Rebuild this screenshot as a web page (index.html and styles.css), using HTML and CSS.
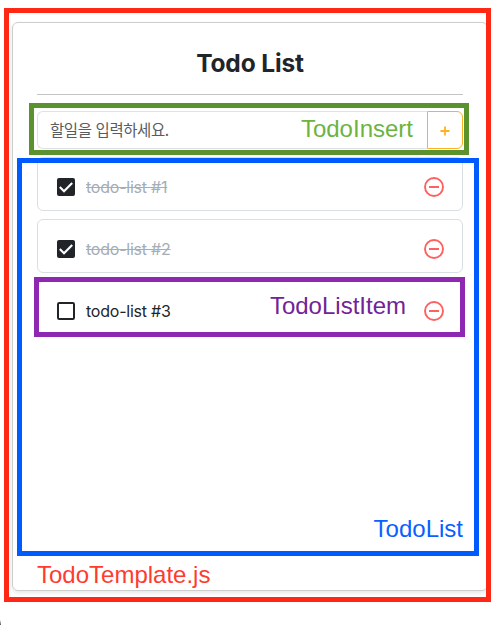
FILE: index.html
```html
<!DOCTYPE html>
<html lang="ko">
<head>
<meta charset="utf-8">
<title>Todo List</title>
<link rel="stylesheet" href="styles.css">
</head>
<body>
<svg class="symbols" aria-hidden="true">
  <symbol id="checked" viewBox="0 0 18 18"><rect width="18" height="18" rx="2" fill="#212529"/><path d="M2.8 9.1 7 13.2 15.2 4.9" fill="none" stroke="#fff" stroke-width="2.1"/></symbol>
  <symbol id="unchecked" viewBox="0 0 18 18"><rect x="1" y="1" width="16" height="16" rx="1.2" fill="none" stroke="#212529" stroke-width="2"/></symbol>
  <symbol id="remove" viewBox="0 0 20 20"><circle cx="10" cy="10" r="9" fill="none" stroke="#ff6060" stroke-width="1.9"/><path d="M5 10h10" stroke="#ff6060" stroke-width="2"/></symbol>
</svg>
<main class="card">
  <h1 class="title">Todo List</h1>
  <form class="insert">
    <div class="field"><span class="placeholder">할일을 입력하세요.</span></div>
    <button class="add" type="button" aria-label="추가"><svg width="10" height="10" viewBox="0 0 10 10"><path d="M5 .5v9M.5 5h9" stroke="#fcb322" stroke-width="1.8"/></svg></button>
  </form>
  <ul class="list">
    <li class="item done"><svg class="check"><use href="#checked"/></svg><span class="text">todo-list #1</span><svg class="remove"><use href="#remove"/></svg></li>
    <li class="item done"><svg class="check"><use href="#checked"/></svg><span class="text">todo-list #2</span><svg class="remove"><use href="#remove"/></svg></li>
    <li class="item"><svg class="check"><use href="#unchecked"/></svg><span class="text">todo-list #3</span><svg class="remove"><use href="#remove"/></svg></li>
  </ul>
</main>
<div class="outline outline-template"><span class="label">TodoTemplate.js</span></div>
<div class="outline outline-insert"><span class="label">TodoInsert</span></div>
<div class="outline outline-list"><span class="label">TodoList</span></div>
<div class="outline outline-item"><span class="label">TodoListItem</span></div>
<div class="corner"></div>
</body>
</html>
```
FILE: styles.css
```css
* { box-sizing: border-box; }
body {
  position: relative;
  margin: 0;
  height: 625px;
  padding: 22px 11px 0 12px;
  overflow: hidden;
  background: #fff;
  color: #212529;
  font-family: Inter, "Noto Sans CJK KR", sans-serif;
}
.symbols { position: absolute; width: 0; height: 0; }
.card {
  height: 569px;
  padding: 0 24px;
  border: 1px solid #cdcdcd;
  border-radius: 6px;
  box-shadow: 0 2px 4px rgba(0, 0, 0, .1);
}
.title {
  height: 72px;
  margin: 0 0 16px;
  padding-top: 25px;
  border-bottom: 1px solid #c4c4c4;
  font-size: 24.5px;
  line-height: 30px;
  font-weight: 700;
  letter-spacing: -.15px;
  text-align: center;
}
.insert { display: flex; height: 38px; margin: 0 0 8px; }
.field {
  flex: 1;
  display: flex;
  align-items: center;
  padding: 0 0 2px 12px;
  border: 1px solid #dee2e6;
  border-right: 0;
  border-radius: 6px 0 0 6px;
}
.placeholder {
  color: #595c5f;
  font: 15.5px/24px "Noto Sans CJK KR", sans-serif;
  letter-spacing: -.4px;
  white-space: nowrap;
}
.add {
  display: flex;
  align-items: center;
  justify-content: center;
  width: 36px;
  padding: 2px 0 0;
  border: 1px solid #fcb322;
  border-radius: 0 6px 6px 0;
  background: #fff;
}
.list { display: flex; flex-direction: column; gap: 8px; margin: 0; padding: 0; list-style: none; }
.item {
  display: flex;
  align-items: center;
  height: 54px;
  padding: 6px 18px 0 19px;
  border: 1px solid #dadfe3;
  border-radius: 6px;
  font-size: 16px;
  letter-spacing: -.23px;
}
.check { width: 18px; height: 18px; margin-right: 11px; }
.text { flex: 1; }
.done .text { color: #a5adb5; text-decoration: line-through; }
.remove { width: 20px; height: 20px; }
.outline { position: absolute; border: 5px solid; }
.label {
  position: absolute;
  font: 24px/28px "Liberation Sans", Arial, sans-serif;
  white-space: nowrap;
}
.outline-template { left: 4px; top: 8px; width: 487px; height: 594px; border-color: #ff2814; color: #ff3b30; }
.outline-template .label { left: 28px; bottom: 8px; }
.outline-insert { left: 29px; top: 103px; width: 440px; height: 52px; border-color: #5b922e; color: #6db33f; }
.outline-insert .label { right: 51px; top: 7px; }
.outline-list { left: 17px; top: 158px; width: 462px; height: 398px; border-color: #005bff; color: #0a60ff; }
.outline-list .label { right: 11px; bottom: 8px; }
.outline-item { left: 34px; top: 277px; width: 431px; height: 60px; border-color: #8e28b3; color: #712397; }
.outline-item .label { right: 54px; top: 10px; }
.corner {
  position: absolute;
  left: 0;
  bottom: 0;
  width: 1px;
  height: 5px;
  background: linear-gradient(#fff, #5c5148);
}
```
